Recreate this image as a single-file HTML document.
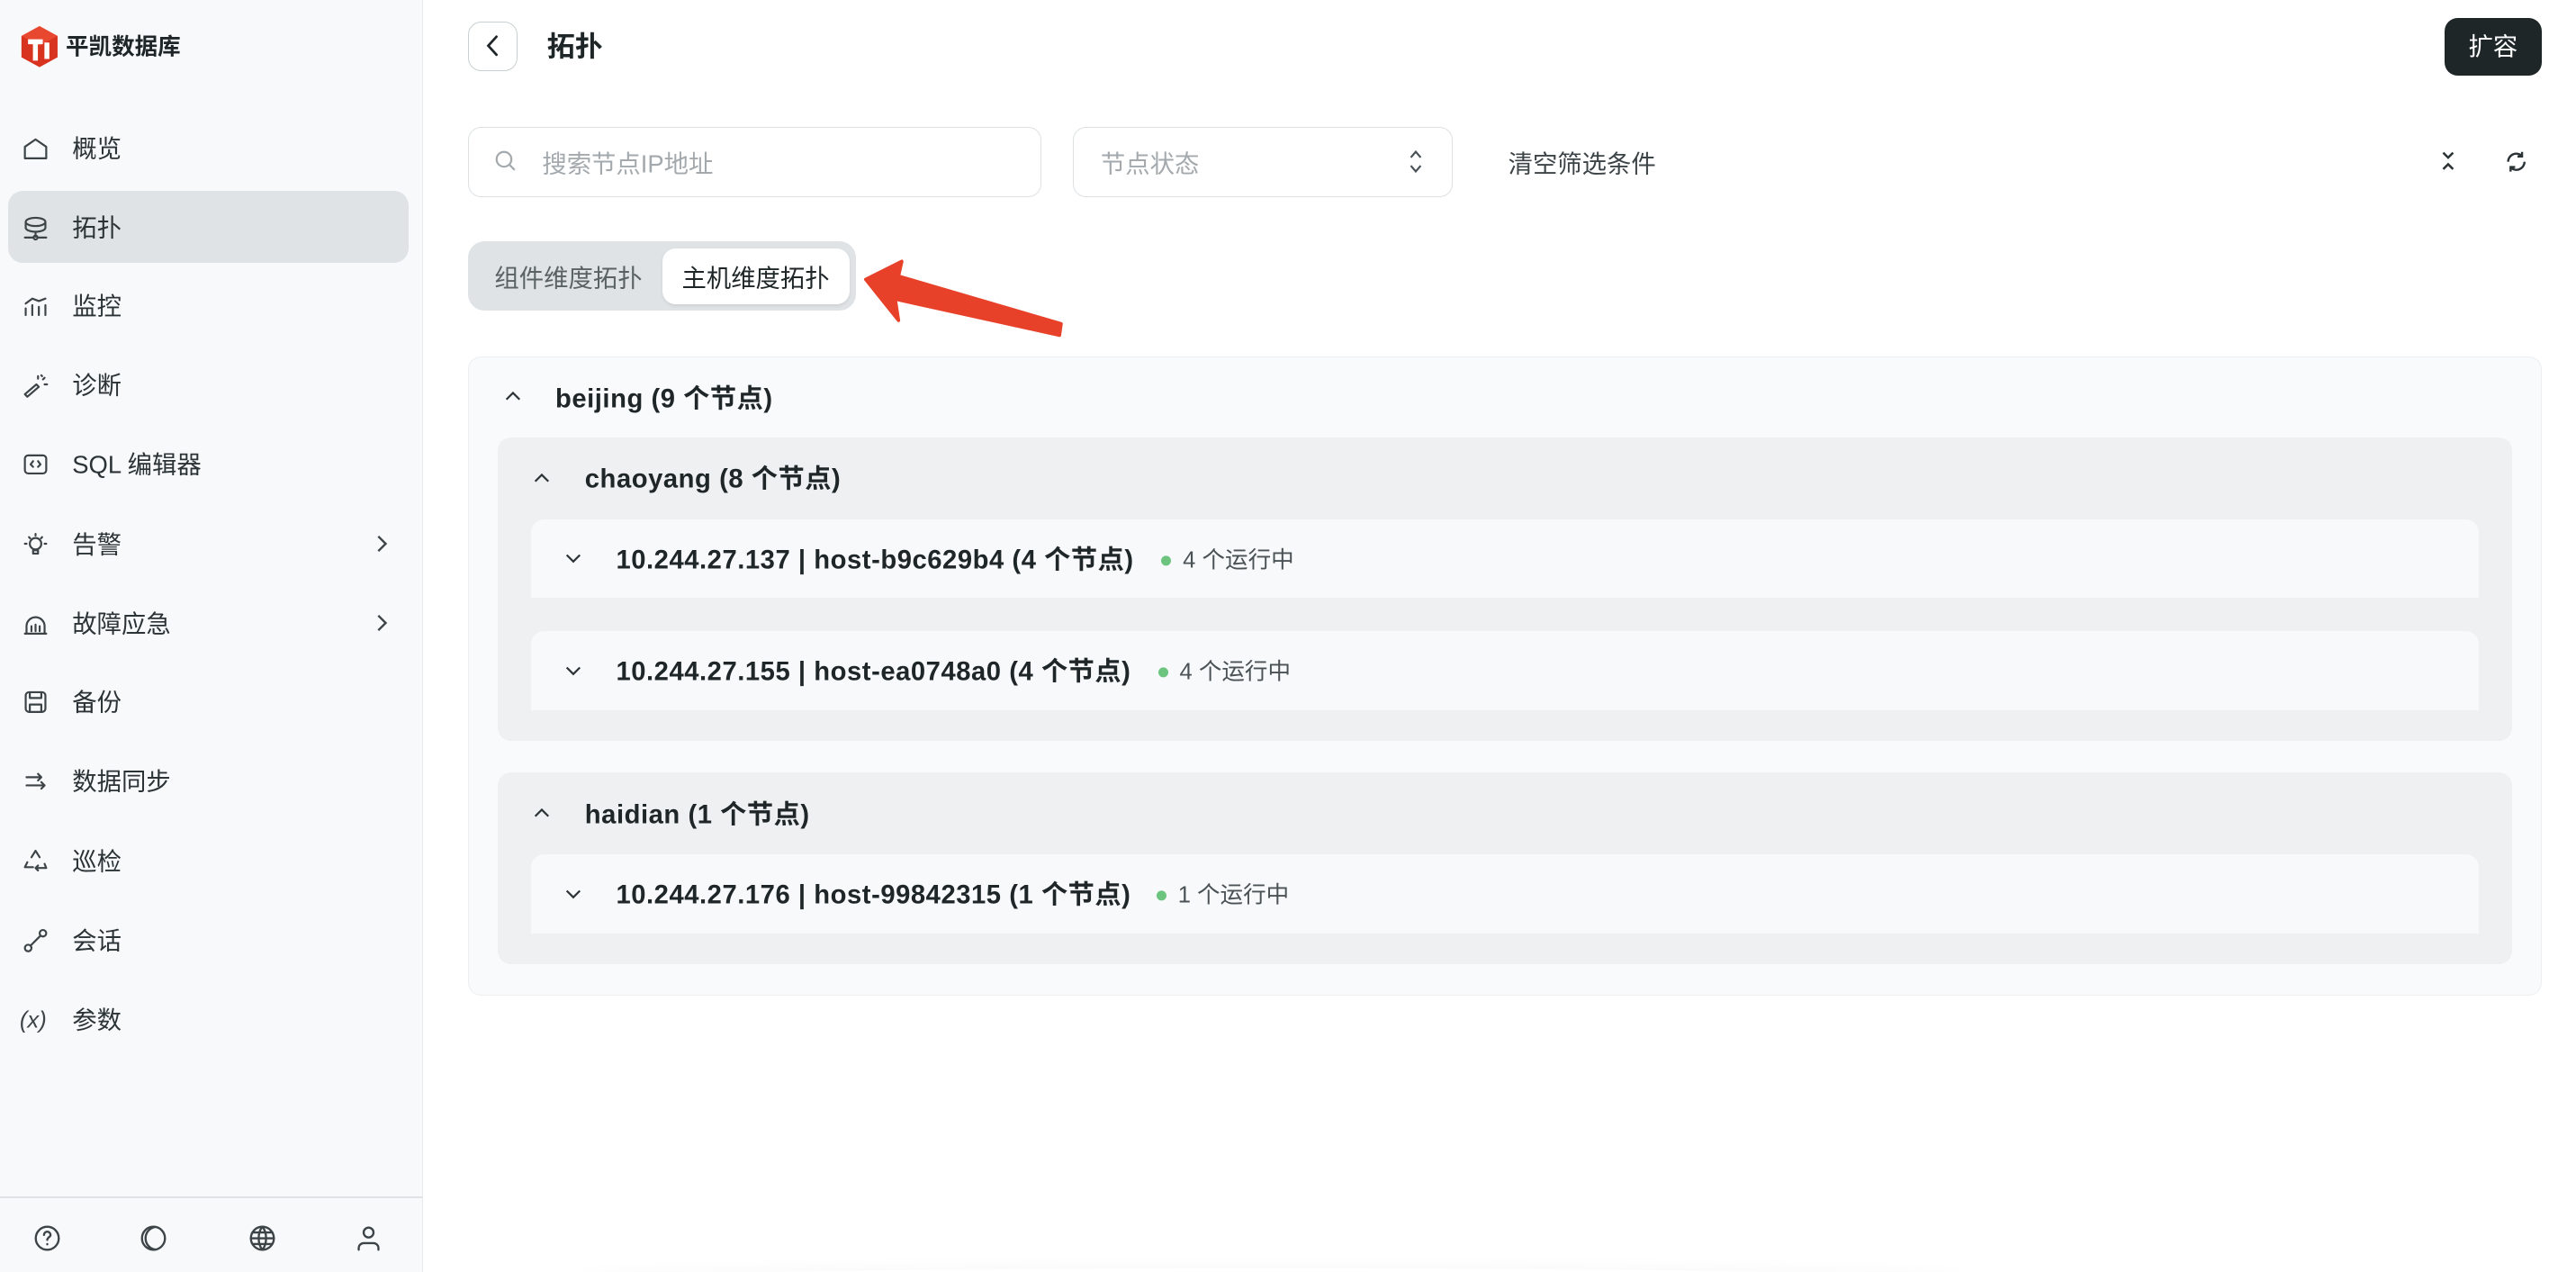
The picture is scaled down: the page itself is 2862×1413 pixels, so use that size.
<!DOCTYPE html>
<html><head><meta charset="utf-8"><style>
html,body{margin:0;padding:0}
body{width:2862px;height:1412px;overflow:hidden;background:#fff;font-family:"Liberation Sans","Noto Sans CJK SC",sans-serif;color:#1f2628}
#w{zoom:1.82526;width:1568px;height:774px;position:relative;overflow:hidden;background:#fff}
.a{position:absolute}
.sb{left:0;top:0;width:257px;height:774px;background:#f8f9fb;border-right:1px solid #e6e9eb}
.nav{position:absolute;left:44px;font-size:15px;color:#2b3336;line-height:20px;transform:translateY(-9px)}
.ic{position:absolute;left:13px;width:17px;height:17px;transform:translateY(-8px)}
.ic *{fill:none;stroke:#3d4448;stroke-width:1.2;stroke-linecap:round;stroke-linejoin:round}
.chev{position:absolute;left:226px;width:12px;height:12px;transform:translateY(-6px)}
.t{position:absolute;line-height:20px;transform:translateY(-9px);white-space:nowrap}
.b{font-weight:bold;font-size:16px;letter-spacing:0.3px;color:#1f2628}
.st{font-size:14px;color:#4a5256}
.dot{position:absolute;width:6px;height:6px;border-radius:3px;background:#6cc47f;transform:translateY(-2px)}
svg.s *{fill:none;stroke:#3d4448;stroke-width:1.3;stroke-linecap:round;stroke-linejoin:round}
</style></head><body><div id="w">
<div class="a sb"></div>
<svg class="a" style="left:12px;top:16px" width="24" height="26" viewBox="0 0 24 26"><polygon points="12,0 23,6 23,19 12,25 1,19 1,6" fill="#d8331f"/><polygon points="12,0 23,6 12,12 1,6" fill="#e8482f"/><path d="M5 8h9v3h-3v10h-3V11H5z M15 10h3v10h-3z" fill="#fff"/></svg>
<div class="t" style="left:40px;top:28px;font-size:14px;font-weight:bold;color:#1f2628">平凯数据库</div>
<div class="a" style="left:5px;top:116px;width:244px;height:44px;border-radius:9px;background:#dfe3e5"></div>
<svg class="ic" style="top:90px" viewBox="0 0 17 17"><path d="M2 7.5L8.5 3 15 7.5V14.5H2z"/></svg>
<div class="nav" style="top:90px">概览</div>
<svg class="ic" style="top:138px" viewBox="0 0 17 17"><ellipse cx="8.5" cy="5" rx="6" ry="2.5"/><path d="M2.5 5v3.5c0 1.4 2.7 2.5 6 2.5s6-1.1 6-2.5V5M8.5 11v3M2 14.5h5M10 14.5h5"/><circle cx="8.5" cy="14.5" r="1.2"/></svg>
<div class="nav" style="top:138px">拓扑</div>
<svg class="ic" style="top:186px" viewBox="0 0 17 17"><path d="M2.5 7l4-3 4 1.5 4-1.5M2.5 10v4M6.5 8v6M10.5 9v5M14.5 8v6"/></svg>
<div class="nav" style="top:186px">监控</div>
<svg class="ic" style="top:234px" viewBox="0 0 17 17"><path d="M2 14l7-6 1.5 1.5-7 6zM10 3v1.5M13 5l1-1M14 8h1.5M12 2.5l.5.5"/></svg>
<div class="nav" style="top:234px">诊断</div>
<svg class="ic" style="top:282px" viewBox="0 0 17 17"><rect x="2" y="3" width="13" height="11" rx="2"/><path d="M7 6.5L5.5 8.5 7 10M10 6.5l1.5 2L10 10"/></svg>
<div class="nav" style="top:282px">SQL 编辑器</div>
<svg class="ic" style="top:331px" viewBox="0 0 17 17"><circle cx="8.5" cy="8" r="3.5"/><path d="M7 12h3v2H7zM8.5 2v1M3 8H2M15 8h-1M4.5 4l.7.7M12.5 4l-.7.7"/></svg>
<div class="nav" style="top:331px">告警</div>
<svg class="chev" style="top:331px" viewBox="0 0 12 12"><path d="M4 1.5L8.5 6 4 10.5" fill="none" stroke="#3d4448" stroke-width="1.3"/></svg>
<svg class="ic" style="top:379px" viewBox="0 0 17 17"><path d="M2 14.5h13M3 14.5V10a5.5 5.5 0 0111 0v4.5M6 10v3M11 10v3M8.5 9v4"/></svg>
<div class="nav" style="top:379px">故障应急</div>
<svg class="chev" style="top:379px" viewBox="0 0 12 12"><path d="M4 1.5L8.5 6 4 10.5" fill="none" stroke="#3d4448" stroke-width="1.3"/></svg>
<svg class="ic" style="top:427px" viewBox="0 0 17 17"><rect x="2.5" y="2.5" width="12" height="12" rx="2"/><path d="M5 2.5v3.5h7V2.5M5 14.5V10h7v4.5"/></svg>
<div class="nav" style="top:427px">备份</div>
<svg class="ic" style="top:475px" viewBox="0 0 17 17"><path d="M3 6h9M10 4l2 2-2 2M3 11h11M12 9l2 2-2 2"/></svg>
<div class="nav" style="top:475px">数据同步</div>
<svg class="ic" style="top:524px" viewBox="0 0 17 17"><path d="M6 6l2.5-4 2.5 4M3.5 9L2 12h5M14 10l1 2.5h-5M10 11l-1.5 1.5L10 14"/></svg>
<div class="nav" style="top:524px">巡检</div>
<svg class="ic" style="top:572px" viewBox="0 0 17 17"><circle cx="4" cy="13" r="2"/><circle cx="13" cy="4" r="2"/><path d="M5.5 11.5l6-6"/></svg>
<div class="nav" style="top:572px">会话</div>
<div class="t" style="left:12px;top:620px;font-size:14px;color:#3d4448;font-style:italic">(<i>x</i>)</div>
<div class="nav" style="top:620px">参数</div>
<div class="a" style="left:0;top:728px;width:257px;height:1px;background:#dfe3e5"></div>
<svg class="a s" style="left:20px;top:745px" width="17" height="17" viewBox="0 0 17 17"><circle cx="8.5" cy="8.5" r="7"/><path d="M6.5 6.5a2 2 0 114 0c0 1.2-2 1.5-2 3M8.5 12v.2"/></svg>
<svg class="a s" style="left:85px;top:745px" width="17" height="17" viewBox="0 0 17 17"><circle cx="8.5" cy="8.5" r="7"/><path d="M9.5 1.6a7 7 0 000 13.8"/></svg>
<svg class="a s" style="left:151px;top:745px" width="17" height="17" viewBox="0 0 17 17"><circle cx="8.5" cy="8.5" r="7"/><path d="M1.5 8.5h14M8.5 1.5c-3 3.5-3 10.5 0 14M8.5 1.5c3 3.5 3 10.5 0 14M2.5 5h12M2.5 12h12"/></svg>
<svg class="a s" style="left:216px;top:745px" width="17" height="17" viewBox="0 0 17 17"><circle cx="8.5" cy="5" r="3"/><path d="M2.5 15.5v-1a3 3 0 013-3h6a3 3 0 013 3v1"/></svg>

<div class="a" style="left:285px;top:13px;width:29px;height:29px;border:1px solid #c9cfd2;border-radius:8px;background:#fff"></div>
<svg class="a" style="left:294px;top:21px" width="12" height="14" viewBox="0 0 12 14"><path d="M8 1.5L3 7l5 5.5" fill="none" stroke="#1f2628" stroke-width="1.5" stroke-linecap="round"/></svg>
<div class="t" style="left:333px;top:28px;font-size:17px;font-weight:bold">拓扑</div>
<div class="a" style="left:1488px;top:11px;width:59px;height:35px;border-radius:8px;background:#1f2628;color:#fff;font-size:15px;line-height:35px;text-align:center">扩容</div>

<div class="a" style="left:285px;top:77px;width:348px;height:42px;border:1px solid #dde1e4;border-radius:8px;background:#fff"></div>
<svg class="a" style="left:301px;top:91px" width="14" height="14" viewBox="0 0 14 14"><circle cx="6" cy="6" r="4.5" fill="none" stroke="#a3a9ad" stroke-width="1.2"/><path d="M9.5 9.5L12.5 12.5" stroke="#a3a9ad" stroke-width="1.2"/></svg>
<div class="t" style="left:330px;top:99px;font-size:15px;color:#a3a9ad">搜索节点IP地址</div>
<div class="a" style="left:653px;top:77px;width:230px;height:42px;border:1px solid #dde1e4;border-radius:8px;background:#fff"></div>
<div class="t" style="left:670px;top:99px;font-size:15px;color:#a3a9ad">节点状态</div>
<svg class="a" style="left:856px;top:90px" width="12" height="17" viewBox="0 0 12 17"><path d="M3 6l3-3.5L9 6M3 11l3 3.5L9 11" fill="none" stroke="#4a5256" stroke-width="1.2"/></svg>
<div class="t" style="left:918px;top:99px;font-size:15px;color:#3d4448">清空筛选条件</div>
<svg class="a" style="left:1484px;top:91px" width="12" height="14" viewBox="0 0 12 14"><path d="M3 2l3 3 3-3M3 12l3-3 3 3" fill="none" stroke="#2b3336" stroke-width="1.4"/></svg>
<svg class="a" style="left:1524px;top:91px" width="15" height="15" viewBox="0 0 15 15"><path d="M2.5 7.5a5 5 0 018.5-3.5M12.5 7.5a5 5 0 01-8.5 3.5M11 1.5v2.8H8.2M4 13.5v-2.8h2.8" fill="none" stroke="#2b3336" stroke-width="1.3"/></svg>

<div class="a" style="left:285px;top:147px;width:236px;height:42px;border-radius:10px;background:#dfe3e5"></div>
<div class="a" style="left:403px;top:151px;width:114px;height:34px;border-radius:8px;background:#fff;box-shadow:0 1px 2px rgba(0,0,0,.08)"></div>
<div class="t" style="left:301px;top:169px;font-size:15px;color:#5a6266">组件维度拓扑</div>
<div class="t" style="left:415px;top:169px;font-size:15px;color:#1f2628">主机维度拓扑</div>
<svg class="a" style="left:520px;top:155px" width="135" height="55" viewBox="520 155 135 55"><path d="M527 170L549 159 547 168 646 197 645 204 545 182 547 195z" fill="#e8412a" stroke="#e8412a" stroke-width="2" stroke-linejoin="round"/></svg>

<div class="a" style="left:285px;top:217px;width:1261px;height:388px;border:1px solid #eceef0;border-radius:8px;background:#f9fafb"></div>
<svg class="a" style="left:306px;top:236px" width="12" height="10" viewBox="0 0 12 10"><path d="M2 7l4-4 4 4" fill="none" stroke="#2b3336" stroke-width="1.2"/></svg>
<div class="t b" style="left:338px;top:242px">beijing (9 个节点)</div>

<div class="a" style="left:303px;top:266px;width:1226px;height:185px;border-radius:8px;background:#eef0f1"></div>
<svg class="a" style="left:324px;top:286px" width="12" height="10" viewBox="0 0 12 10"><path d="M2 7l4-4 4 4" fill="none" stroke="#2b3336" stroke-width="1.2"/></svg>
<div class="t b" style="left:356px;top:291px">chaoyang (8 个节点)</div>
<div class="a" style="left:323px;top:316px;width:1186px;height:48px;border-radius:8px 8px 0 0;background:#f8f9fa"></div>
<svg class="a" style="left:343px;top:335px" width="12" height="10" viewBox="0 0 12 10"><path d="M2 3l4 4 4-4" fill="none" stroke="#2b3336" stroke-width="1.2"/></svg>
<div class="t b" style="left:375px;top:340px">10.244.27.137 | host-b9c629b4 (4 个节点)</div>
<div class="dot" style="left:707px;top:340px"></div>
<div class="t st" style="left:720px;top:340px">4 个运行中</div>
<div class="a" style="left:323px;top:384px;width:1186px;height:48px;border-radius:8px 8px 0 0;background:#f8f9fa"></div>
<svg class="a" style="left:343px;top:403px" width="12" height="10" viewBox="0 0 12 10"><path d="M2 3l4 4 4-4" fill="none" stroke="#2b3336" stroke-width="1.2"/></svg>
<div class="t b" style="left:375px;top:408px">10.244.27.155 | host-ea0748a0 (4 个节点)</div>
<div class="dot" style="left:705px;top:408px"></div>
<div class="t st" style="left:718px;top:408px">4 个运行中</div>

<div class="a" style="left:303px;top:470px;width:1226px;height:117px;border-radius:8px;background:#eef0f1"></div>
<svg class="a" style="left:324px;top:490px" width="12" height="10" viewBox="0 0 12 10"><path d="M2 7l4-4 4 4" fill="none" stroke="#2b3336" stroke-width="1.2"/></svg>
<div class="t b" style="left:356px;top:495px">haidian (1 个节点)</div>
<div class="a" style="left:323px;top:520px;width:1186px;height:48px;border-radius:8px 8px 0 0;background:#f8f9fa"></div>
<svg class="a" style="left:343px;top:539px" width="12" height="10" viewBox="0 0 12 10"><path d="M2 3l4 4 4-4" fill="none" stroke="#2b3336" stroke-width="1.2"/></svg>
<div class="t b" style="left:375px;top:544px">10.244.27.176 | host-99842315 (1 个节点)</div>
<div class="dot" style="left:704px;top:544px"></div>
<div class="t st" style="left:717px;top:544px">1 个运行中</div>

<div class="a" style="left:350px;top:772px;width:850px;height:14px;border-radius:50%;box-shadow:0 -3px 8px rgba(0,0,0,.025)"></div>
</div></body></html>
